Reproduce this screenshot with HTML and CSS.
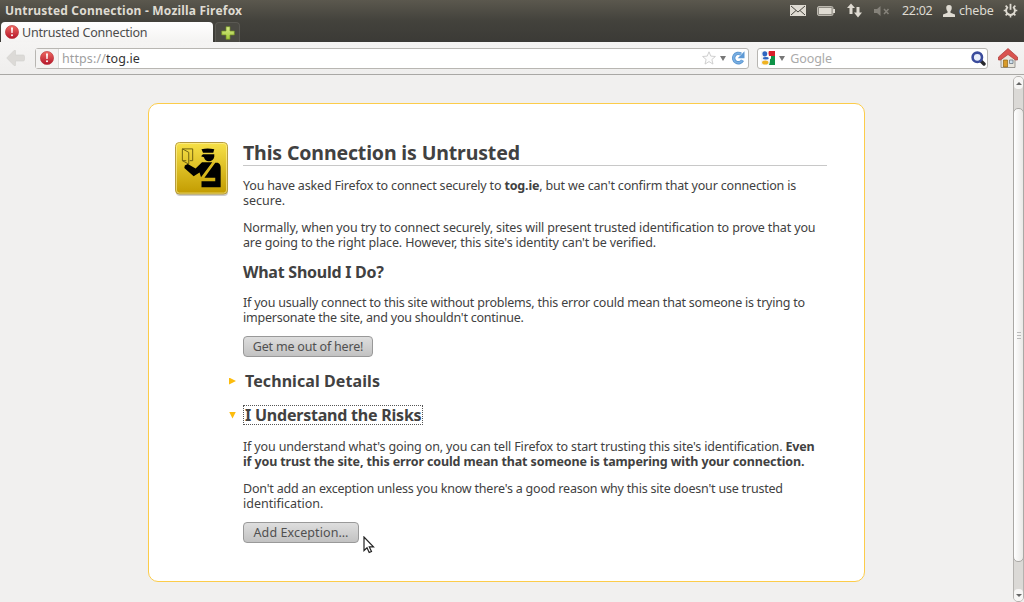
FILE: index.html
```
<!DOCTYPE html>
<html lang="en">
<head>
  <meta charset="UTF-8">
  <title>Untrusted Connection</title>
  <link rel="stylesheet" href="styles.css">
</head>
<body>

  <svg class="defs">
    <defs>
      <linearGradient id="red" x1="0" y1="0" x2="0" y2="1"><stop offset="0" stop-color="#ee6a62"/><stop offset="1" stop-color="#b5152a"/></linearGradient>
      <linearGradient id="gold" x1="0" y1="0" x2="0" y2="1"><stop offset="0" stop-color="#f7e148"/><stop offset="1" stop-color="#c29b00"/></linearGradient>
      <linearGradient id="green" x1="0" y1="0" x2="0" y2="1"><stop offset="0" stop-color="#d6ea86"/><stop offset="1" stop-color="#a4c93a"/></linearGradient>
      <symbol id="alert" viewBox="0 0 14 14">
        <circle cx="7" cy="7" r="6.6" fill="url(#red)" stroke="#b93038" stroke-width=".6"/>
        <path d="M6 2.5h2l-.4 5.5H6.4z" fill="#fff"/><circle cx="7" cy="10.3" r="1" fill="#fff"/>
      </symbol>
    </defs>
  </svg>

  <header class="panel">
    <span class="title">Untrusted Connection - Mozilla Firefox</span>
    <div class="tray">
      <svg class="mail" width="16" height="11" viewBox="0 0 16 11"><path fill="#dfdbd2" d="M0 0h16v11H0z"/><path d="M1 1l7 6 7-6M1 10l5-4.500M15 10l-5-4.500" fill="none" stroke="#4a4841" stroke-width="1"/></svg>
      <svg class="battery" width="18" height="10" viewBox="0 0 18 10"><rect x=".5" y=".5" width="15.500" height="9" rx="1.500" fill="#8f8c83" stroke="#bdb9b0"/><path fill="#dfdbd2" d="M2 2h12.500v6H2zM16 3h2v4h-2z"/></svg>
      <svg class="network" width="15" height="15" viewBox="0 0 15 15"><path fill="#dfdbd2" d="M4 .5L8 5H5.500v6h-3V5H0zM9.500 4h3v5.500H15l-4 5-4-5h2.500z"/></svg>
      <svg class="sound" width="16" height="10" viewBox="0 0 16 10"><path fill="#85827a" d="M0 3h3l3.500-3v10L3 7H0z"/><path d="M10 3l4.500 5M14.500 3L10 8" stroke="#85827a" stroke-width="1.500"/></svg>
      <span class="clock">22:02</span>
      <svg class="user" width="12" height="12" viewBox="0 0 12 12"><path fill="#dfdbd2" d="M6 0c2.300 0 3 1.500 2.700 3.500C8.500 5 8 5.500 7.500 6.300v1.400L12 9.500V12H0V9.500l4.500-1.800V6.300C4 5.500 3.500 5 3.300 3.500 3 1.500 3.700 0 6 0z"/></svg>
      <span class="name">chebe</span>
      <svg class="gear" width="15" height="15" viewBox="0 0 15 15"><path d="M4.900 4a4.400 4.400 0 1 0 5.200 0" fill="none" stroke="#dfdbd2" stroke-width="2"/><path d="M7.500 12v2.500M.7 7.500H3M12 7.500h2.300M2.600 2.600l1.500 1.500M10.900 10.900l1.500 1.500M2.600 12.400l1.500-1.500M10.900 4.100l1.500-1.500" stroke="#dfdbd2" stroke-width="1.600"/><path d="M7.500 .8v6" stroke="#dfdbd2" stroke-width="1.800"/></svg>
    </div>
  </header>

  <nav class="tabs">
    <div class="tab">
      <svg width="14" height="14"><use href="#alert"/></svg>
      <span>Untrusted Connection</span>
    </div>
    <div class="new-tab">
      <svg width="14" height="14" viewBox="0 0 14 14"><path d="M5 .7h4V5h4.300v4H9v4.300H5V9H.7V5H5z" fill="url(#green)" stroke="#6d8b22" stroke-width=".7"/></svg>
    </div>
  </nav>

  <div class="toolbar">
    <svg class="back" width="19" height="16" viewBox="0 0 19 16"><path d="M8 .5L.7 8 8 15.500h1.500V11H17q1.500 0 1.500-1.500v-3Q18.500 5 17 5H9.500V.5z" fill="#dcdad7" stroke="#d2d0cd" stroke-width=".6"/></svg>
    <div class="urlbar">
      <div class="identity"><svg width="14" height="14"><use href="#alert"/></svg></div>
      <span class="url">https://<b>tog.ie</b></span>
      <svg class="star" width="14" height="14" viewBox="0 0 14 14"><path d="M7 .8l1.800 4.300 4.600.4-3.500 3 1.100 4.600L7 10.600l-4 2.500 1.100-4.600-3.500-3 4.600-.4z" fill="#fcfcfc" stroke="#c4c4c4" stroke-width=".8"/></svg>
      <i class="drop"></i>
      <svg class="reload" width="14" height="14" viewBox="0 0 14 14"><path d="M11.500 9.200A4.700 4.700 0 1 1 10 3.200" fill="none" stroke="#5c96d0" stroke-width="3.400"/><path d="M11.500 9.200A4.700 4.700 0 1 1 10 3.200" fill="none" stroke="#79afe2" stroke-width="1.600"/><path d="M13.500.3v6.900H6.700z" fill="#5f9ad5"/></svg>
    </div>
    <div class="search">
      <svg class="google" width="14" height="14" viewBox="0 0 14 14"><path fill="#d9212b" d="M7 0h7v5H8z"/><path fill="#0e9347" d="M8 5h6v9H8l1-5z"/><path fill="#f4f4f4" d="M0 0h8L6 5l3 4-1 5H0z"/><ellipse cx="3.800" cy="2.800" rx="2.400" ry="2.600" fill="#2f65c0"/><ellipse cx="4.800" cy="7.300" rx="3" ry="1.300" fill="#2f65c0"/><ellipse cx="4.200" cy="11.500" rx="3.200" ry="2" fill="#efb221"/><path fill="#fff" d="M8 5h2v2.500L8 9z"/></svg>
      <i class="drop"></i>
      <span class="hint">Google</span>
      <svg class="lens" width="15" height="15" viewBox="0 0 15 15"><path d="M9.500 9.500l3.500 3.500" stroke="#27272c" stroke-width="3.400" stroke-linecap="round"/><circle cx="6.300" cy="6.300" r="4.700" fill="#e9eefa" stroke="#3a4b9c" stroke-width="2.600"/></svg>
    </div>
    <svg class="home" width="20" height="20" viewBox="0 0 20 20"><path d="M3 9.500L10 4l7 5.500v10H3z" fill="#e8e5dc" stroke="#85837d" stroke-width=".8"/><path fill="#d99b2b" stroke="#8f6411" stroke-width=".7" d="M5.500 12h4v7h-4z"/><path fill="#cfe0ee" stroke="#6c7984" stroke-width=".8" d="M11.500 12h3.500v3.500h-3.500z"/><path d="M10 .5L.5 9v3H2.500L10 6.500l7.500 5.500h2V9z" fill="#d9534f" stroke="#a93936" stroke-width=".7"/></svg>
  </div>

  <div class="view">
    <main class="card">
      <svg class="officer" width="54" height="55" viewBox="0 0 55 56">
        <rect x="1" y="2" width="53" height="53" rx="4" fill="#b8b8b8" opacity=".7"/>
        <rect x=".5" y=".5" width="53" height="52.500" rx="4" fill="url(#gold)" stroke="#b59a3c"/>
        <rect x="1.500" y="1.500" width="51" height="50.500" rx="3" fill="none" stroke="#fff3a0" stroke-opacity=".65"/>
        <path d="M7.500 7h10.500v12h-3M7.500 7v12l6.500 3.500V10.500zM7.500 19h4" fill="none" stroke="#6f6210" stroke-width="1"/>
        <path d="M27 7.500q6-2 13 0l-1 3.500H28.500z"/>
        <path d="M28.500 12.500H40V15q-1 4.500-5.500 4.500-4 0-5-4l-3-1z"/>
        <path d="M10 24l3-1.500 8 4.500 6.500-6.500H38L26.500 36 25 31l-6 4L9.500 26.500z"/>
        <path d="M41 21h2.500q3 1 3 5v20H27v-6h14v-3.500H30z"/>
        <path d="M39.500 20.500L28 36.500" stroke="#d7b71c" stroke-width="1.200"/>
      </svg>
      <div class="content">
        <h1><span>This Connection is Untrusted</span></h1>
        <p><span class="l1">You have asked Firefox to connect securely to <b>tog.ie</b>, but we can't confirm that your connection is</span><br><span>secure.</span></p>
        <p><span class="l3">Normally, when you try to connect securely, sites will present trusted identification to prove that you</span><br><span class="l4">are going to the right place. However, this site's identity can't be verified.</span></p>
        <h2 class="what"><span class="h-what">What Should I Do?</span></h2>
        <p><span class="l5">If you usually connect to this site without problems, this error could mean that someone is trying to</span><br><span class="l6">impersonate the site, and you shouldn't continue.</span></p>
        <button class="leave">Get me out of here!</button>
        <h2 class="expander closed"><span class="h-tech">Technical Details</span></h2>
        <h2 class="expander open"><span class="h-risks">I Understand the Risks</span></h2>
        <p><span class="l7">If you understand what's going on, you can tell Firefox to start trusting this site's identification. <b>Even</b></span><br><b class="l8">if you trust the site, this error could mean that someone is tampering with your connection.</b></p>
        <p><span class="l9">Don't add an exception unless you know there's a good reason why this site doesn't use trusted</span><br><span>identification.</span></p>
        <button class="add">Add Exception…</button>
      </div>
    </main>
    <div class="scrollbar">
      <div class="arrow up"></div>
      <div class="thumb"><i></i><i></i><i></i></div>
      <div class="arrow down"></div>
    </div>
  </div>

  <svg class="cursor" width="12" height="18" viewBox="0 0 12 18"><path d="M1 1v13.500l3-2.800 2.200 4.800 2.300-1-2.200-4.600h4.200z" fill="#fff" stroke="#222" stroke-width="1.200"/></svg>

</body>
</html>
```
FILE: styles.css
```
* {
  box-sizing: border-box;
}

body {
  margin: 0;
  height: 602px;
  overflow: hidden;
  display: flex;
  flex-direction: column;
  font-family: "Noto Sans", "Open Sans", sans-serif;
  font-size: 12.5px;
  color: #414141;
  background: #f1f0ef;
  white-space: nowrap;
}

svg {
  display: block;
  flex: none;
}

.defs {
  position: absolute;
  width: 0;
  height: 0;
}

/* top panel */
.panel {
  flex: none;
  height: 21px;
  display: flex;
  justify-content: space-between;
  align-items: center;
  padding: 0 6px 0 5px;
  background: linear-gradient(#5b584e, #43423c);
  color: #dfdbd2;
  line-height: 20px;
}

.title {
  font-weight: bold;
  font-size: 12px;
  letter-spacing: 0.2px;
}

.tray {
  display: flex;
  align-items: center;
}

.battery { margin-left: 11px; }
.network { margin-left: 12px; }
.sound { margin-left: 12px; }
.clock { margin-left: 12px; width: 31px; letter-spacing: -0.3px; }
.user { margin-left: 10px; }
.name { margin-left: 4px; width: 35px; letter-spacing: -0.2px; }
.gear { margin-left: 9px; }

/* tabs */
.tabs {
  flex: none;
  height: 21px;
  display: flex;
  padding-left: 1px;
  background: linear-gradient(#43423c, #3b3a36);
}

.tab {
  width: 212px;
  display: flex;
  align-items: center;
  gap: 3px;
  padding-left: 4px;
  margin-top: 1px;
  border-radius: 4px 4px 0 0;
  background: linear-gradient(#fff, #f4f3f2);
  color: #4c4c4c;
  letter-spacing: -0.22px;
}

.new-tab {
  width: 25px;
  display: flex;
  justify-content: center;
  align-items: center;
  margin: 1px 0 0 2px;
  border: 1px solid #5a5953;
  border-bottom: 0;
  border-radius: 4px 4px 0 0;
  background: #4a4943;
}

/* toolbar */
.toolbar {
  flex: none;
  height: 33px;
  display: flex;
  align-items: center;
  padding: 0 6px;
  background: linear-gradient(#f5f4f3, #efeeed);
  border-bottom: 1px solid #a9a8a5;
}

.urlbar,
.search {
  height: 21px;
  display: flex;
  align-items: center;
  border: 1px solid #b8b6b2;
  border-radius: 3px;
  background: #fff;
}

.urlbar {
  width: 715px;
  margin-left: 10px;
  padding-right: 3px;
}

.identity {
  width: 23px;
  height: 19px;
  display: flex;
  align-items: center;
  padding-left: 4px;
  border-right: 1px solid #dbdad8;
  background: #f4f3f2;
}

.url {
  flex: 1;
  padding-left: 3px;
  color: #a0a0a0;
  letter-spacing: 0.1px;
}

.url b {
  font-weight: normal;
  color: #333;
}

.drop {
  border: 3.5px solid transparent;
  border-top: 5px solid #777;
  border-bottom: 0;
}

.star + .drop { margin: 0 5px 0 4px; }

.search {
  width: 231px;
  margin-left: 8.5px;
  padding: 0 1px 0 3px;
}

.google + .drop { margin-left: 4px; }

.hint {
  flex: 1;
  padding-left: 5px;
  color: #aaa;
  letter-spacing: -0.1px;
}

.home { margin-left: 10px; }

/* page */
.view {
  flex: 1;
  min-height: 0;
  display: flex;
  justify-content: space-between;
}

.card {
  width: 717px;
  height: 479px;
  display: flex;
  margin: 28px 0 0 148px;
  padding: 38px 37px 0 26px;
  border: 1px solid #fccc4a;
  border-radius: 10px;
  background: #fff;
}

.content {
  width: 584px;
  margin-left: 14px;
}

h1 {
  height: 24px;
  margin: 0 0 13px;
  border-bottom: 1px solid #c8c8c8;
  font-size: 19.5px;
  line-height: 22px;
  letter-spacing: -0.14px;
}

h2 {
  height: 20px;
  margin: 12px 0 13px;
  font-size: 16px;
  line-height: 20px;
}

.what { line-height: 18px; }

p {
  height: 29px;
  margin: 0 0 13px;
  line-height: 14.5px;
}

/* per-line tracking keeps the right edge of the copy */
.l1 { letter-spacing: -0.17px; }
.l3 { letter-spacing: -0.14px; }
.l4 { letter-spacing: -0.14px; }
.l5 { letter-spacing: -0.21px; }
.l6 { letter-spacing: -0.22px; }
.l7 { letter-spacing: -0.15px; }
.l8 { letter-spacing: -0.12px; }
.l9 { letter-spacing: -0.2px; }
.h-what { letter-spacing: -0.25px; }
.h-tech { letter-spacing: 0.08px; }
.h-risks { letter-spacing: -0.22px; }

button {
  display: block;
  height: 21px;
  margin: -2px 0 0;
  padding: 0 0 1px;
  border: 1px solid #999;
  border-radius: 4px;
  background: linear-gradient(#dedede, #c2c2c2);
  color: #505050;
  font: inherit;
  line-height: 17px;
}

.leave { width: 130px; letter-spacing: -0.2px; }
.add { width: 116px; letter-spacing: 0.1px; }

.expander {
  display: flex;
  align-items: center;
  margin: 14px 0 0 -14px;
}

.expander::before {
  content: "";
  width: 7px;
  height: 7px;
  margin-right: 7px;
  background: #fcbc0d;
}

.expander span { padding: 0 2px; }
.closed::before { clip-path: polygon(0 0, 100% 50%, 0 100%); }
.open::before { clip-path: polygon(0 0, 100% 0, 50% 100%); }
.open { margin-bottom: 15px; }
.open span { outline: 1px dotted #555; outline-offset: -1px; }

/* scrollbar */
.scrollbar {
  width: 11px;
  display: flex;
  flex-direction: column;
  margin-top: 1px;
  border: 1px solid #b4b2af;
  border-radius: 5px;
  background: #dbd9d6;
}

.arrow {
  flex: none;
  height: 12px;
  display: flex;
  justify-content: center;
  align-items: center;
  border-radius: 4px;
  background: #f7f6f5;
}

.arrow::before {
  content: "";
  border: 3px solid transparent;
}

.up::before { border-bottom: 3px solid #666; border-top: 0; }
.down::before { border-top: 3px solid #666; border-bottom: 0; }

.thumb {
  flex: 1;
  display: flex;
  flex-direction: column;
  justify-content: center;
  align-items: center;
  gap: 2px;
  margin: 19px -1px 27px;
  border: 1px solid #aaa8a5;
  border-radius: 5px;
  background: linear-gradient(90deg, #fff, #e9e8e6);
}

.thumb i {
  width: 4px;
  height: 1px;
  background: #bbb;
}

.cursor {
  position: absolute;
  left: 363px;
  top: 536px;
}
```
